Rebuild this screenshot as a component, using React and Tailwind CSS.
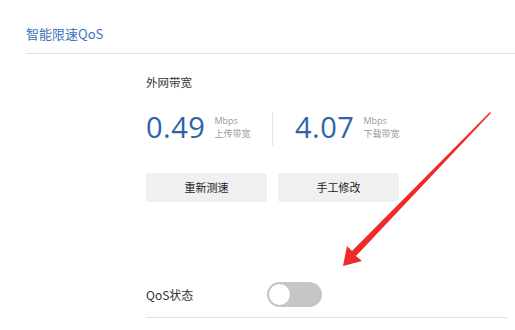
import { useState } from 'react';

const cjk = { fontFamily: '"Noto Sans CJK SC", "Noto Sans", sans-serif' };
const num = { fontFamily: '"Open Sans", "Noto Sans", sans-serif' };

function Rate({ value, label }) {
  return (
    <div className="flex items-center gap-[9px]">
      <span className="text-[29px] leading-none text-[#2e63a8] tracking-[0.5px]" style={num}>{value}</span>
      <div className="flex flex-col text-[#9a9a9a] leading-[13px] pt-[1px]">
        <span className="text-[9px]" style={num}>Mbps</span>
        <span className="text-[9px]" style={cjk}>{label}</span>
      </div>
    </div>
  );
}

export default function App() {
  const [qosOn, setQosOn] = useState(false);

  return (
    <div className="relative w-[515px] h-[330px] bg-white overflow-hidden" style={cjk}>
      <div className="pl-[26px] pt-[24px]">
        <h1 className="text-[13px] leading-[20px] text-[#3b72b8]">智能限速QoS</h1>
        <div className="mt-[9px] h-px bg-[#e2e2e2]" />
      </div>

      <div className="pl-[146px] pt-[19px]">
        <div className="text-[11.5px] leading-[18px] text-[#333]">外网带宽</div>

        <div className="mt-[17px] flex items-center h-[36px]">
          <div className="w-[126px]">
            <Rate value="0.49" label="上传带宽" />
          </div>
          <div className="w-px h-[34px] bg-[#e6e6e6] mt-[6px]" />
          <div className="pl-[22px]">
            <Rate value="4.07" label="下载带宽" />
          </div>
        </div>

        <div className="mt-[29px] flex gap-[11px]">
          <button className="w-[121px] h-[29px] rounded-[3px] bg-[#f0f0f0] text-[11px] text-[#222]">重新测速</button>
          <button className="w-[121px] h-[29px] rounded-[3px] bg-[#f0f0f0] text-[11px] text-[#222]">手工修改</button>
        </div>

        <div className="mt-[80px] flex items-center h-[25px] w-[362px]">
          <span className="w-[121px] text-[12px] text-[#333]">QoS状态</span>
          <button
            onClick={() => setQosOn(!qosOn)}
            className={`w-[55px] h-[25px] rounded-full p-[1px] flex items-center ${qosOn ? 'bg-[#3b72b8] justify-end' : 'bg-[#c6c6c6] justify-start'}`}
          >
            <span className="block w-[23px] h-[23px] rounded-full bg-white border border-[#bdbdbd]" />
          </button>
        </div>
        <div className="mt-[10px] h-px w-[362px] bg-[#e2e2e2]" />
      </div>

      <svg className="absolute left-0 top-0 pointer-events-none" width="515" height="330" viewBox="0 0 515 330">
        <polygon points="490,112 491,113 356,256 351,252" fill="#ee2a2a" />
        <polygon points="343,266 347,246 352,251 356,256 362,261" fill="#ee2a2a" />
      </svg>
    </div>
  );
}
